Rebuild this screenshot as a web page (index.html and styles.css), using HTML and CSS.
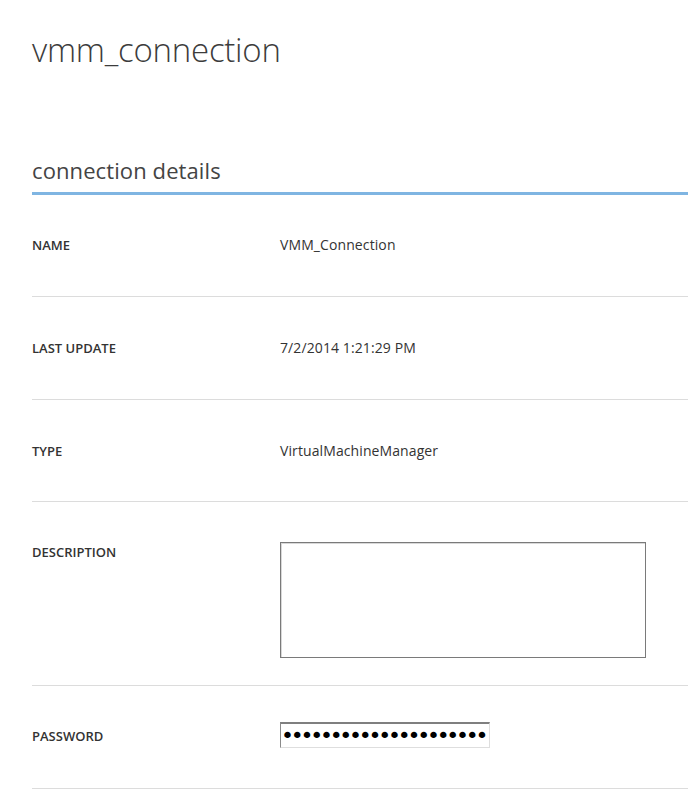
FILE: index.html
```html
<!DOCTYPE html>
<html>
<head>
<meta charset="utf-8">
<link rel="stylesheet" href="styles.css">
</head>
<body>
<div class="page">
  <h1 class="title">vmm_connection</h1>
  <h2 class="section">connection details</h2>
  <div class="rows">
    <div class="row">
      <div class="label">NAME</div>
      <div class="value">VMM_Connection</div>
    </div>
    <div class="row">
      <div class="label">LAST UPDATE</div>
      <div class="value">7/2/2014 1:21:29 PM</div>
    </div>
    <div class="row row-type">
      <div class="label">TYPE</div>
      <div class="value">VirtualMachineManager</div>
    </div>
    <div class="row row-desc">
      <div class="label">DESCRIPTION</div>
      <div class="value"><textarea class="desc"></textarea></div>
    </div>
    <div class="row row-pass">
      <div class="label">PASSWORD</div>
      <div class="value"><input class="pass" type="password" value="aaaaaaaaaaaaaaaaaaaaa"></div>
    </div>
  </div>
</div>
</body>
</html>
```
FILE: styles.css
```css
html, body {
  margin: 0;
  padding: 0;
  background: #ffffff;
}
body {
  font-family: "Open Sans", "Noto Sans", sans-serif;
  color: #333333;
}
.page {
  padding-left: 32px;
  padding-top: 28px;
}
.title {
  margin: 0;
  font-weight: 300;
  font-size: 33px;
  line-height: 44px;
  color: #3c3c3c;
  letter-spacing: -0.25px;
}
.section {
  margin: 83px 0 0 0;
  font-weight: 400;
  font-size: 22px;
  line-height: 30px;
  color: #444444;
  padding-bottom: 7px;
  border-bottom: 3px solid #7fb5e2;
  letter-spacing: 0.1px;
}
.row {
  display: flex;
  align-items: flex-start;
  padding: 41px 0 41px 0;
  border-bottom: 1px solid #dcdcdc;
}
.row:first-child {
  padding-top: 40px;
}
.row-type {
  padding-bottom: 40px;
}
.label {
  width: 248px;
  flex: none;
  font-size: 13px;
  font-weight: 600;
  line-height: 20px;
  color: #333333;
}
.value {
  font-size: 14px;
  line-height: 20px;
  color: #333333;
  letter-spacing: 0.1px;
}
.row-desc {
  padding-top: 40px;
  padding-bottom: 27px;
}
.desc {
  display: block;
  box-sizing: border-box;
  width: 366px;
  height: 116px;
  margin: 0;
  border: 1px solid #7a7a7a;
  box-shadow: inset 1px 1px 0 #d8d8d8;
  resize: none;
  background: #fff;
}
.row-pass {
  padding-top: 36px;
  padding-bottom: 40px;
}
.row-pass .label {
  margin-top: 4px;
}
.pass {
  display: block;
  box-sizing: border-box;
  width: 210px;
  height: 26px;
  margin: 0;
  padding: 0;
  border-style: solid;
  border-width: 2px 1px 1px 1px;
  border-color: #7f7f7f #dedede #dedede #8a8a8a;
  font-family: "DejaVu Sans", sans-serif;
  font-size: 22px;
  letter-spacing: -3.25px;
  color: #000;
  background: #fff;
  outline: none;
}
```
